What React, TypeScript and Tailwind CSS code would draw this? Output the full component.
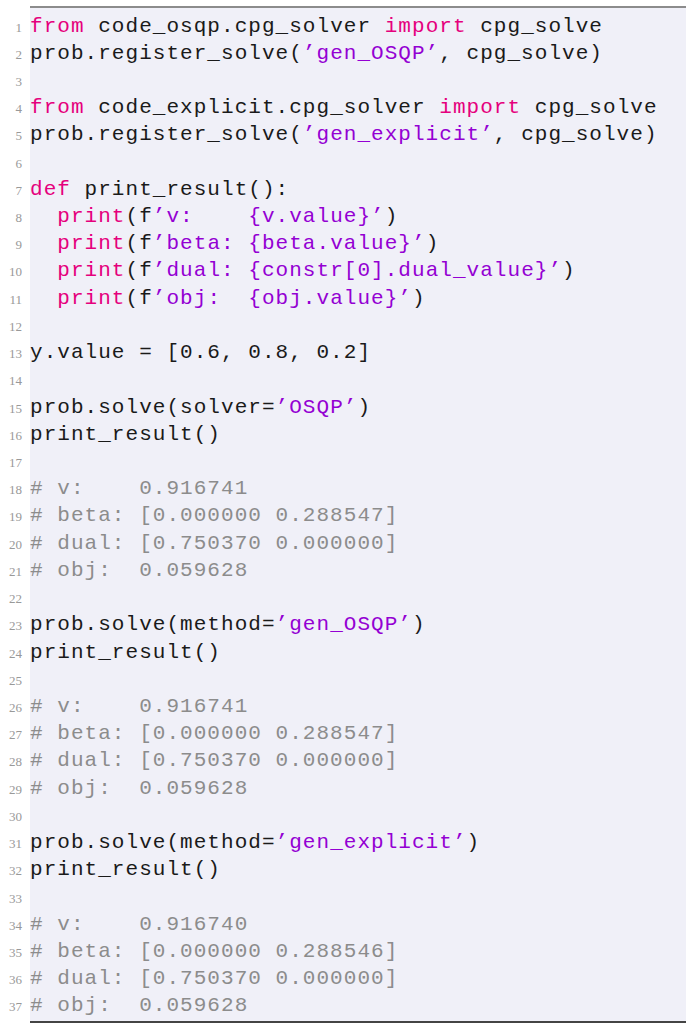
import React from "react";

const LINES: string[] = [
  "from code_osqp.cpg_solver import cpg_solve",
  "prob.register_solve('gen_OSQP', cpg_solve)",
  "",
  "from code_explicit.cpg_solver import cpg_solve",
  "prob.register_solve('gen_explicit', cpg_solve)",
  "",
  "def print_result():",
  "  print(f'v:    {v.value}')",
  "  print(f'beta: {beta.value}')",
  "  print(f'dual: {constr[0].dual_value}')",
  "  print(f'obj:  {obj.value}')",
  "",
  "y.value = [0.6, 0.8, 0.2]",
  "",
  "prob.solve(solver='OSQP')",
  "print_result()",
  "",
  "# v:    0.916741",
  "# beta: [0.000000 0.288547]",
  "# dual: [0.750370 0.000000]",
  "# obj:  0.059628",
  "",
  "prob.solve(method='gen_OSQP')",
  "print_result()",
  "",
  "# v:    0.916741",
  "# beta: [0.000000 0.288547]",
  "# dual: [0.750370 0.000000]",
  "# obj:  0.059628",
  "",
  "prob.solve(method='gen_explicit')",
  "print_result()",
  "",
  "# v:    0.916740",
  "# beta: [0.000000 0.288546]",
  "# dual: [0.750370 0.000000]",
  "# obj:  0.059628",
];

type Seg = { t: string; k: "code" | "kw" | "str" | "com" };

function tokenize(line: string): Seg[] {
  if (line === "") return [{ t: " ", k: "code" }];
  if (line.trimStart().startsWith("#")) return [{ t: line, k: "com" }];
  const out: Seg[] = [];
  const parts = line.split(/('[^']*')/);
  parts.forEach((p, i) => {
    if (!p) return;
    if (i % 2 === 1) {
      out.push({ t: p.replace(/'/g, "\u2019"), k: "str" });
    } else {
      const sub = p.split(/\b(from|import|def|print)\b/);
      sub.forEach((s, j) => {
        if (!s) return;
        out.push({ t: s, k: j % 2 === 1 ? "kw" : "code" });
      });
    }
  });
  return out;
}

const colorClass: Record<Seg["k"], string> = {
  code: "text-[#1a1a1a]",
  kw: "text-[#e5007d]",
  str: "text-[#9400d3]",
  com: "text-[#8c8c8c]",
};

export default function App() {
  return (
    <div className="w-[692px] h-[1029px] bg-white pt-[6px]">
      <div className="ml-[30px] w-[656px] h-[2px] bg-[#8c8c8c]" />
      <div className="ml-[30px] w-[656px] h-[4.5px] bg-[#f0f0f8]" />
      <div className="flex flex-col">
        {LINES.map((line, i) => (
          <div key={i} className="flex items-baseline h-[27.22px] leading-[27.22px]">
            <div className="w-[30px] shrink-0 pr-[8px] text-right text-[13px] text-[#999999] font-['Liberation_Serif',serif]">
              {i + 1}
            </div>
            <div className="w-[656px] shrink-0 h-[27.22px] bg-[#f0f0f8] whitespace-pre font-['Liberation_Mono',monospace] text-[21px] tracking-[1.04px]">
              {tokenize(line).map((s, j) => (
                <span key={j} className={colorClass[s.k]}>
                  {s.t}
                </span>
              ))}
            </div>
          </div>
        ))}
      </div>
      <div className="ml-[30px] w-[656px] h-[1.5px] bg-[#f0f0f8]" />
      <div className="ml-[30px] w-[656px] h-[2px] bg-[#444]" />
    </div>
  );
}
